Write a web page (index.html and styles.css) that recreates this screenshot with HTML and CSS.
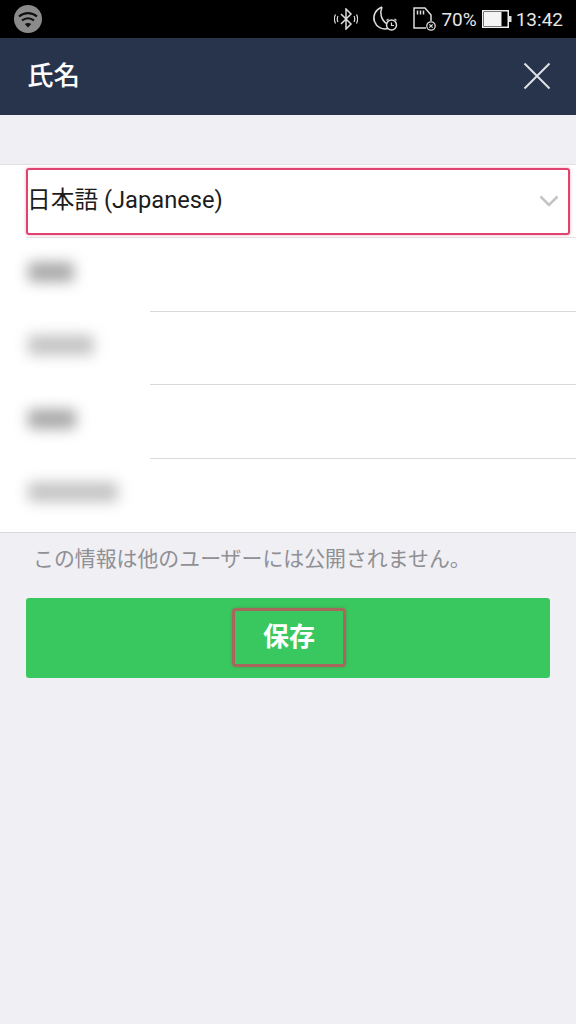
FILE: index.html
```html
<!DOCTYPE html>
<html lang="ja">
<head>
    <meta charset="UTF-8">
    <meta name="viewport" content="width=device-width, initial-scale=1.0">
    <title>氏名</title>
    <link rel="stylesheet" href="styles.css">
</head>
<body>
    <div class="status-bar">
        <svg class="icon-wifi" width="28" height="28" viewBox="0 0 28 28">
            <circle cx="14" cy="14" r="14" fill="#8b8b8b"/>
            <path d="M5 11.500c5.400-4.600 12.600-4.600 18 0M8 15.500c3.600-3 8.400-3 12 0" fill="none" stroke="#111" stroke-width="2.200"/>
            <path d="M10.800 19c2-1.500 4.400-1.500 6.400 0L14 22.500z" fill="#111"/>
        </svg>
        <div class="status-right">
            <svg class="icon-bt" width="24" height="22" viewBox="0 0 24 22">
                <path d="M7 6l10 10-5 5V1l5 5L7 16" fill="none" stroke="#ddd" stroke-width="1.500"/>
                <path d="M4 8c-1 2-1 4 0 6M1.500 6.500c-1.500 3-1.500 6 0 9M20 8c1 2 1 4 0 6M22.500 6.500c1.500 3 1.500 6 0 9" fill="none" stroke="#ddd" stroke-width="1.200"/>
            </svg>
            <svg class="icon-moon" width="28" height="28" viewBox="0 0 28 28">
                <path d="M11 2C4 5 1.500 11 3.500 16.500 5.500 22 11 25 17 23.500" fill="none" stroke="#ddd" stroke-width="1.500"/>
                <path d="M11 2C8.500 8 10 15 16 19" fill="none" stroke="#ddd" stroke-width="1.500"/>
                <circle cx="20.500" cy="20" r="5" fill="none" stroke="#ddd" stroke-width="1.500"/>
                <path d="M20.500 17.500V20.500H23M15.500 15.500l2-1.500M25.500 15.500l-2-1.500" fill="none" stroke="#ddd" stroke-width="1.200"/>
            </svg>
            <svg class="icon-sd" width="25" height="24" viewBox="0 0 25 24">
                <path d="M14 21H2V1h11l6 7v6" fill="none" stroke="#ddd" stroke-width="1.500"/>
                <path d="M5.500 3.500v4M8.500 3.500v4M11.500 3.500v4" stroke="#ddd" stroke-width="1.500"/>
                <circle cx="19" cy="19" r="4.200" fill="none" stroke="#ddd" stroke-width="1.300"/>
                <path d="M17.300 17.300l3.400 3.400M20.700 17.300l-3.400 3.400" stroke="#ddd" stroke-width="1.200"/>
            </svg>
            <span class="status-text pct">70%</span>
            <svg class="icon-battery" width="30" height="18" viewBox="0 0 30 18">
                <rect x="0.750" y="0.750" width="25.500" height="16.500" fill="none" stroke="#eee" stroke-width="1.500"/>
                <rect x="2" y="2" width="17.500" height="14" fill="#f4f4f4"/>
                <rect x="27" y="6" width="2.500" height="6" fill="#ddd"/>
            </svg>
            <span class="status-text clock">13:42</span>
        </div>
    </div>

    <header class="nav-bar">
        <h1>氏名</h1>
        <svg width="28" height="28" viewBox="0 0 28 28">
            <path d="M1.500 1.500l25 25M26.500 1.500l-25 25" stroke="#dfe1e6" stroke-width="2"/>
        </svg>
    </header>

    <section class="form">
        <div class="lang-row">
            <div class="lang-box">
                <span>日本語 (Japanese)</span>
                <svg width="20" height="12" viewBox="0 0 20 12">
                    <path d="M1.500 1.500L10 10l8.500-8.500" fill="none" stroke="#c4c4c6" stroke-width="2.500"/>
                </svg>
            </div>
        </div>
        <div class="name-row">
            <div class="name-cell"><span class="smudge w1"></span></div>
            <div class="name-field"></div>
        </div>
        <div class="name-row">
            <div class="name-cell"><span class="smudge w2"></span></div>
            <div class="name-field"></div>
        </div>
        <div class="name-row">
            <div class="name-cell"><span class="smudge w3"></span></div>
            <div class="name-field"></div>
        </div>
        <div class="name-row last">
            <div class="name-cell"><span class="smudge w4"></span></div>
            <div class="name-field"></div>
        </div>
    </section>

    <p class="hint">この情報は他のユーザーには公開されません。</p>

    <button class="save-btn"><span>保存</span></button>
</body>
</html>
```

FILE: styles.css
```css
* {
    box-sizing: border-box;
}
body {
    margin: 0;
    height: 1024px;
    overflow: hidden;
    background-color: #efeff4;
    font-family: Roboto, "Noto Sans CJK JP", sans-serif;
}
.status-bar {
    height: 38px;
    background-color: #000;
    display: flex;
    align-items: center;
    justify-content: space-between;
    padding: 0 13px 0 14px;
    color: #e6e6e6;
}
.status-right {
    display: flex;
    align-items: center;
}
.status-text {
    font-size: 19px;
}
.icon-bt {
    margin-right: 13px;
}
.icon-moon {
    margin-right: 13px;
}
.icon-sd {
    margin-right: 4px;
}
.pct {
    margin-right: 5px;
}
.clock {
    margin-left: 4px;
}
.nav-bar {
    height: 77px;
    background-color: #28334c;
    display: flex;
    align-items: center;
    justify-content: space-between;
    padding: 0 25px 0 27px;
}
.nav-bar h1 {
    margin: 0 0 6px;
    font-size: 26.500px;
    font-weight: 500;
    color: #fff;
}
.nav-bar svg {
    margin-bottom: 2px;
}
.form {
    margin-top: 49px;
    background-color: #fff;
    border-top: 1px solid #e2e2e6;
    border-bottom: 1px solid #d9d9dd;
}
.lang-row {
    height: 73px;
    margin-left: 26px;
    padding: 3px 6px 2px 0;
    border-bottom: 1px solid #e4e4e7;
}
.lang-box {
    height: 67px;
    border: 2px solid #e0436f;
    border-radius: 3px;
    display: flex;
    align-items: center;
    justify-content: space-between;
    padding-right: 9px;
    font-size: 23.700px;
    color: #1c1c1c;
    box-shadow: 0 0 3px rgba(224, 67, 111, 0.5);
}
.lang-box span {
    margin: 0 0 7px -1px;
}
.lang-box svg {
    margin-bottom: 2px;
}
.name-row {
    height: 73.500px;
    display: flex;
}
.name-cell {
    width: 150px;
    padding: 0 0 6px 28px;
    display: flex;
    align-items: center;
}
.name-field {
    flex: 1;
    border-bottom: 1px solid #d9d9dd;
}
.name-row.last .name-field {
    border-bottom: none;
}
.smudge {
    display: block;
    height: 20px;
    background-color: #a9a9a9;
    border-radius: 4px;
    filter: blur(7px);
}
.w1 {
    width: 46px;
}
.w2 {
    width: 66px;
    background-color: #c4c4c4;
}
.w3 {
    width: 48px;
}
.w4 {
    width: 90px;
    background-color: #c4c4c4;
}
.hint {
    margin: 14px 0 26px 33px;
    font-size: 20.900px;
    line-height: 25px;
    color: #8f8f94;
}
.save-btn {
    display: flex;
    align-items: center;
    justify-content: center;
    width: 524px;
    height: 80px;
    margin-left: 26px;
    padding: 0 0 2px 2px;
    border: none;
    border-radius: 3px;
    background-color: #38c85f;
    font-family: inherit;
}
.save-btn span {
    display: flex;
    align-items: center;
    justify-content: center;
    width: 114px;
    height: 59px;
    padding-bottom: 6px;
    border: 3px solid #a8675c;
    border-radius: 4px;
    font-size: 26px;
    font-weight: 700;
    color: #fff;
    box-shadow: 0 0 3px rgba(120, 90, 70, 0.5);
}
```
